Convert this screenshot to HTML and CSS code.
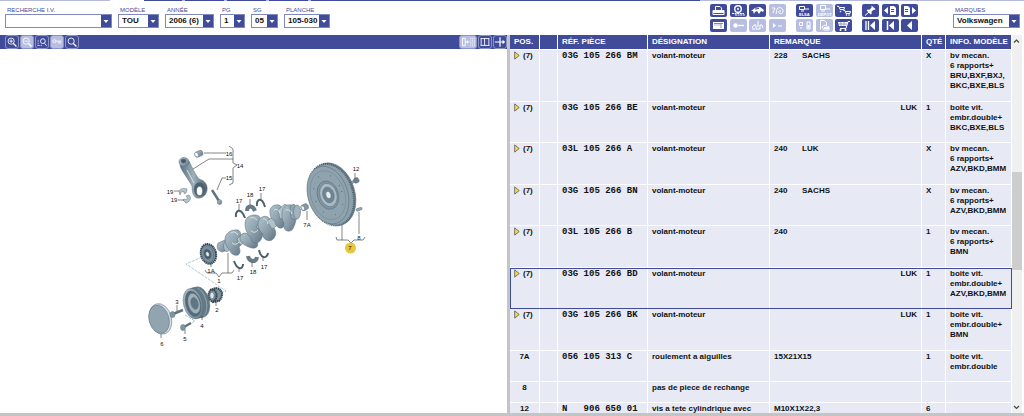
FILE: index.html
```html
<!DOCTYPE html>
<html lang="fr">
<head>
<meta charset="utf-8">
<title>Catalogue de pièces</title>
<link rel="stylesheet" href="styles.css">
</head>
<body>
<svg class="defs" aria-hidden="true">
  <defs>
    <symbol id="down" viewBox="0 0 10 12"><path d="M2.5 5h5L5 8z" fill="#fff"/></symbol>
    <symbol id="play" viewBox="0 0 6 9"><path d="M.7 .9v7.200L5.200 4.500z" fill="#f5e03a" stroke="#555" stroke-width=".8"/></symbol>
    <symbol id="lens" viewBox="0 0 14 13"><circle cx="6" cy="5.5" r="3.6" fill="none" stroke="#fff"/><path d="M8.6 8.2l3.6 3.6" stroke="#fff" stroke-width="1.4"/></symbol>
  </defs>
</svg>

<div class="tabs"><i class="tab wide"></i><i class="tab open"></i><i class="tab dark"></i><i class="tab dark"></i><i class="tab dark"></i><i class="tab dark"></i><i class="tab dark long"></i><i class="tab end"></i><i class="tab last"></i></div>

<header class="top">
  <form class="filters">
    <div class="field search"><label for="iv">RECHERCHE I.V.</label><div class="drop"><input id="iv" type="text"><svg class="arrow"><use href="#down"/></svg></div></div>
    <div class="field model"><label for="mo">MODÈLE</label><div class="drop"><select id="mo"><option>TOU</option></select><svg class="arrow"><use href="#down"/></svg></div></div>
    <div class="field year"><label for="an">ANNÉE</label><div class="drop"><select id="an"><option>2006 (6)</option></select><svg class="arrow"><use href="#down"/></svg></div></div>
    <div class="field pg"><label for="pg">PG</label><div class="drop"><select id="pg"><option>1</option></select><svg class="arrow"><use href="#down"/></svg></div></div>
    <div class="field sg"><label for="sg">SG</label><div class="drop"><select id="sg"><option>05</option></select><svg class="arrow"><use href="#down"/></svg></div></div>
    <div class="field plate"><label for="pl">PLANCHE</label><div class="drop"><select id="pl"><option>105-030</option></select><svg class="arrow"><use href="#down"/></svg></div></div>
  </form>

  <div class="tools">
    <div class="group four">
      <button class="tool" aria-label="Imprimer"><svg viewBox="0 0 17 13"><path d="M5.500 6V2.500h4.500l1.500 1.500v2M3 6.500h11v4H3z" fill="none" stroke="#fff"/><path d="M3 7h11v2H3zM5 10h7v1H5z" fill="#fff"/></svg></button>
      <button class="tool" aria-label="Roue"><svg viewBox="0 0 17 13"><circle cx="8" cy="5" r="3.300" fill="none" stroke="#fff" stroke-width="1.400"/><circle cx="8" cy="5" r="1" fill="#fff"/><path d="M2 9.500h12M5 11h10" stroke="#fff" stroke-dasharray="2 .6"/></svg></button>
      <button class="tool" aria-label="Véhicule"><svg viewBox="0 0 17 13"><path d="M2 7l4-3 5-1 4 3-1 2-2-1-2 3-2-3-2 1-1 2-1-3z" fill="#fff"/><path d="M6 5l4-.5" stroke="#404c9a"/></svg></button>
      <button class="tool off" aria-label="Références"><svg viewBox="0 0 17 13"><path d="M3 4h3l-2 5M7 10c1-2 0-5 2-6s5 0 5 3-3 3-4 2 0-3 2-2" fill="none" stroke="#fff"/></svg></button>
      <button class="tool" aria-label="Fiche"><svg viewBox="0 0 17 13"><path d="M3 3h11v7H3z" fill="#fff"/><path d="M4 4.500h9M11 5v4" stroke="#7c85bd"/><path d="M4 6h6" stroke="#b6bbdc"/></svg></button>
      <button class="tool off" aria-label="Clé"><svg viewBox="0 0 17 13"><circle cx="5.500" cy="6.500" r="2.200" fill="#fff"/><path d="M8 6.500h6" stroke="#fff" stroke-width="1.400"/></svg></button>
      <button class="tool off" aria-label="Atelier"><svg viewBox="0 0 17 13"><path d="M3 9l2-3h2v4h4V6h2l1 3M9 2v6M3 10h3" fill="none" stroke="#fff"/></svg></button>
      <button class="tool off" aria-label="Suite"><svg viewBox="0 0 17 13"><path d="M4 4l3 2.500L4 9z" fill="#fff"/><path d="M9 7h4" stroke="#fff"/></svg></button>
    </div>
    <div class="group three">
      <button class="tool" aria-label="ELSA"><svg viewBox="0 0 17 13"><path d="M3.500 2.500h5v3h-5zM5 7h3M9 5h4" fill="none" stroke="#fff"/><text class="mini" x="3" y="12">ELSA</text></svg></button>
      <button class="tool off" aria-label="Dépôt"><svg viewBox="0 0 17 13"><path d="M4.500 1.500h5v4h-5zM5 7h4M10 5h4" fill="none" stroke="#fff"/><text class="mini" x="2" y="12">DEPOT</text></svg></button>
      <button class="tool" aria-label="Paniers"><svg viewBox="0 0 17 13"><path d="M2 2l2 .5 1 3h4l.5-2H5M8 6l2 .5 1 3h4l.5-2H11" fill="none" stroke="#fff"/><circle cx="5.500" cy="7.500" r=".8" fill="#fff"/><circle cx="11.500" cy="11" r=".8" fill="#fff"/><circle cx="14" cy="11" r=".8" fill="#fff"/></svg></button>
      <button class="tool off" aria-label="Transfert"><svg viewBox="0 0 17 13"><path d="M3.500 3.500h3v3h-3zM5 8v2M11 3h3v7h-3z" fill="none" stroke="#fff"/><path d="M11.500 6h2v3h-2z" fill="#fff"/></svg></button>
      <button class="tool off" aria-label="Document"><svg viewBox="0 0 17 13"><path d="M4.500 10.500v-9h4l2 2v3M6 8l3-2 4 2v3H8z" fill="none" stroke="#fff"/><path d="M8 8h5v2H8z" fill="#fff"/></svg></button>
      <button class="tool" aria-label="Panier"><svg viewBox="0 0 17 13"><path d="M15 2.500h-2l-2 7H5" fill="none" stroke="#fff"/><path d="M3 3h9.500l-1 4H4z" fill="#fff"/><path d="M4 5h8M6 3v4M9 3v4" stroke="#404c9a" stroke-width=".5"/><circle cx="5.500" cy="11" r="1" fill="#fff"/><circle cx="10.500" cy="11" r="1" fill="#fff"/></svg></button>
    </div>
    <div class="group last three">
      <button class="tool" aria-label="Épingler"><svg viewBox="0 0 17 13"><path d="M9.500 1.500l4 3.500-1 1-1-.2-2 2 .2 2-1 .8-4-4 .8-1 2 .2 2-2z" fill="#fff"/><path d="M7 8l-4 3.500" stroke="#fff"/></svg></button>
      <button class="tool" aria-label="Page précédente"><svg viewBox="0 0 17 13"><path d="M6 3v7L2 6.500zM8 2h4l2 2v7H8z" fill="#fff"/><path d="M9 5.500h3M9 7.500h3" stroke="#404c9a"/></svg></button>
      <button class="tool" aria-label="Page suivante"><svg viewBox="0 0 17 13"><path d="M11 3v7l4-3.500zM3 2h4l2 2v7H3z" fill="#fff"/><path d="M4 5.500h3M4 7.500h3" stroke="#404c9a"/></svg></button>
      <button class="tool" aria-label="Début"><svg viewBox="0 0 17 13"><path d="M4 2v9M6.500 2v9" stroke="#fff" stroke-width="1.300"/><path d="M13 2v9L8 6.500z" fill="#fff"/></svg></button>
      <button class="tool" aria-label="Premier"><svg viewBox="0 0 17 13"><path d="M5.500 2v9" stroke="#fff" stroke-width="1.500"/><path d="M12 2v9L7 6.500z" fill="#fff"/></svg></button>
      <button class="tool" aria-label="Précédent"><svg viewBox="0 0 17 13"><path d="M11 2v9L6 6.500z" fill="#fff"/></svg></button>
    </div>
  </div>

  <div class="field brand"><label for="br">MARQUES</label><div class="drop"><select id="br"><option>Volkswagen</option></select><svg class="arrow"><use href="#down"/></svg></div></div>
</header>

<main class="work">
  <section class="picture">
    <div class="bar">
      <button class="zoom" aria-label="Agrandir"><svg viewBox="0 0 14 13"><use href="#lens"/><path d="M4 5.500h4M6 3.500v4" stroke="#fff"/></svg></button>
      <button class="zoom off" aria-label="Réduire"><svg viewBox="0 0 14 13"><use href="#lens"/><path d="M4 5.500h4" stroke="#fff"/></svg></button>
      <button class="zoom" aria-label="Zone"><svg viewBox="0 0 14 13"><path d="M2.500 11V3.500M2 10.500h6" stroke="#fff" stroke-dasharray="1 1"/><circle cx="8" cy="5.500" r="2.800" fill="none" stroke="#fff"/><path d="M10 8l2.500 3" stroke="#fff"/></svg></button>
      <button class="zoom off" aria-label="Clé"><svg viewBox="0 0 14 13"><circle cx="4" cy="5.500" r="1.800" fill="none" stroke="#fff"/><path d="M6 5.500h6M8 7.500h4" stroke="#fff"/></svg></button>
      <button class="zoom" aria-label="Loupe"><svg viewBox="0 0 14 13"><use href="#lens"/></svg></button>
      <span class="fill"></span>
      <button class="zoom off big" aria-label="Liste"><svg viewBox="0 0 17 13"><path d="M2.500 2.500h3v8h-3zM6 6.500h4M8 5v3" fill="none" stroke="#fff"/><path d="M11.500 2v9M13.500 2v9M15.500 2v9" stroke="#fff" stroke-dasharray="1 1"/></svg></button>
      <button class="zoom" aria-label="Colonnes"><svg viewBox="0 0 14 13"><path d="M2 2.500h10M2 10.500h10M2.500 2v9M11.500 2v9M6.500 2v9" stroke="#fff"/></svg></button>
      <button class="zoom" aria-label="Déplacer"><svg viewBox="0 0 14 13"><path d="M7 1v11M1 6.500h11" stroke="#fff" stroke-width="1.400"/><path d="M10 4l3 2.500L10 9z" fill="#fff"/></svg></button>
    </div>
    <svg class="diagram" viewBox="0 49 507 364" preserveAspectRatio="xMinYMin meet" role="img" aria-label="Vilebrequin et bielle">
      <defs>
        <linearGradient id="steel" x1="0" y1="0" x2="1" y2="1"><stop offset="0" stop-color="#b3c3cc"/><stop offset=".5" stop-color="#8fa3af"/><stop offset="1" stop-color="#5f7482"/></linearGradient>
        <linearGradient id="rod" x1="0" y1="0" x2="1" y2="0"><stop offset="0" stop-color="#5b707d"/><stop offset=".5" stop-color="#9db1bc"/><stop offset="1" stop-color="#4d616e"/></linearGradient>
      </defs>
      <g class="guide">
        <path d="M202 257L186 264 226 291l-9 3M185 315l10 6-5 3M296 212l28-15"/>
      </g>
      <g class="part">
        <!-- connecting rod -->
        <path fill="url(#rod)" d="M180 165c0 4 9 15 12 21 0 8 2 13 8 12s9-9 6-14c-2-4-6-4-8-6-3-4-6-11-9-17z"/>
        <ellipse cx="184" cy="162" rx="5" ry="4.500" fill="url(#steel)"/><ellipse cx="183.500" cy="161" rx="2.500" ry="2" fill="#435664"/>
        <ellipse cx="199.500" cy="189.500" rx="5.500" ry="7" fill="#4c606d"/><ellipse cx="199.500" cy="191" rx="3" ry="4.500" fill="#fff"/>
        <path d="M187 170l7 13" class="shine"/>
        <g transform="rotate(-22 199 154)"><rect x="195" y="151" width="8" height="5.500" rx="2" fill="url(#steel)"/><ellipse cx="196.500" cy="153.700" rx="1.700" ry="2.500" fill="#fff"/></g>
        <path class="bolt" d="M212 190l7 11"/><ellipse cx="219.500" cy="202" rx="2.300" ry="2.500" fill="url(#steel)"/>
        <path fill="#b4c4cd" d="M179 191c2-3 5-3 8-2l-1 4-2 .5v-2l-3 .5-1 3zM189 195c3 3 1 7-3 8l-3-3 2-1 1 1c2-1 1-3 0-4z"/>
        <!-- flywheel -->
        <g transform="rotate(-17 330 195)"><ellipse cx="333" cy="195" rx="22" ry="32" fill="#687d8a"/><ellipse cx="331" cy="195" rx="22" ry="31.500" class="teeth"/><ellipse cx="328" cy="194.500" rx="20" ry="29.500" fill="#8fa3af"/><ellipse cx="328" cy="194.500" rx="17" ry="25"  class="ring"/><ellipse cx="328" cy="194.500" rx="10.500" ry="14.500" fill="#8195a1"/><ellipse cx="328.500" cy="194.500" rx="8.500" ry="12" fill="#a9bac4"/><ellipse cx="328.500" cy="194.500" rx="5.500" ry="8" fill="#708593"/><ellipse cx="328.500" cy="194.500" rx="2.500" ry="3.700" fill="#e8eef0"/><ellipse cx="328.500" cy="194.500" rx="14" ry="21" class="holes"/></g>
        <g transform="rotate(-25 355 181)"><rect x="351" y="180" width="4" height="2" fill="#8fa3af"/><rect x="354" y="178.500" width="5" height="5" rx="1.500" fill="#6e8390"/></g>
        <rect x="356" y="208" width="6" height="2.500" rx="1" transform="rotate(-20 359 209)" fill="#94a8b3"/>
        <!-- crankshaft -->
        <path d="M218 243l9-4 5 10-10 3q-7-2-4-9z" fill="url(#steel)"/>
        <ellipse cx="227" cy="246" rx="3.500" ry="5.500" fill="#a8bac4"/>
        <path d="M225 239c0-5 5-9 10-9 5-1 6 3 6 7 2 4 1 8-2 10 1 3 2 6-1 8-3 1-8-1-8-5-3-2-5-6-5-11z" fill="url(#steel)"/>
        <path d="M237 239l5-5c4 0 7 3 6 7l-8 4z" fill="#b7c6ce"/>
        <path d="M240 237c2-5 7-5 9-1s6 3 8 6 0 7-5 6-13-5-12-11z" fill="url(#steel)"/>
        <path d="M245 224c0-7 5-9 10-9 5 0 7 4 5 8 4 4 4 13 0 18-3 3-9 3-9-3-4-4-6-9-6-14z" fill="url(#steel)"/>
        <path d="M256 227l6-8c6 0 11 3 10 8l-9 5z" fill="#a7b9c3"/>
        <path d="M258 224c1-7 6-9 10-7 4 3 3 8 6 11 3 4 2 9-2 12-4 2-10-1-9-6-3-2-5-6-5-10z" fill="url(#steel)"/>
        <path d="M267 221l7-5 5 8-7 5z" fill="#b2c2cb"/>
        <path d="M270 213c-1-6 4-9 9-8 4 2 5 6 4 9 4 5 3 11-1 14-4 1-7-3-7-7-4-2-5-5-5-8z" fill="url(#steel)"/>
        <path d="M278 210l7-6 6 4-3 9-8 2z" fill="#b3c3cc"/>
        <path d="M282 214c0-7 4-10 9-9 4 1 3 6 4 10 2 4 0 11-3 15-4 3-10 0-8-7-2-2-2-5-2-9z" fill="url(#steel)"/>
        <path d="M290 206l4-2 6 8-4 8-5-2z" fill="#91a5b1"/><ellipse cx="297" cy="212" rx="3.500" ry="7" fill="#a0b3be"/>
        <path class="shine" d="M231 233q4-3 7 2M250 218q4-2 7 2M263 219q4-1 5 5M274 210q4-2 6 3M286 210q5-1 6 4M232 243q4 3 7-1M251 231q4 3 7-1"/>
        <g transform="rotate(-25 304 207)"><rect x="301" y="204.500" width="7" height="6" rx="2" fill="#8397a3"/><ellipse cx="302.500" cy="207.500" rx="1.700" ry="2.500" fill="#e9eef0"/></g>
        <!-- sprocket, gear and pulley -->
        <g transform="rotate(-15 208 254)"><ellipse cx="208.500" cy="254" rx="7.500" ry="10" class="gear"/><ellipse cx="207.500" cy="254" rx="6" ry="8.500" fill="#7b909d"/><ellipse cx="207.500" cy="254" rx="3.500" ry="5" fill="#475a67"/><ellipse cx="207.500" cy="254" rx="1.700" ry="2.500" fill="#e8eef1"/></g>
        <path d="M210 290l6-2c7 1 8 8 3 13l-6 1z" class="gear"/><ellipse cx="212.500" cy="295.500" rx="4" ry="5.800" class="gear"/><ellipse cx="212" cy="295.500" rx="2" ry="3.300" fill="#dfe8ec"/>
        <g transform="rotate(-14 196 303)"><ellipse cx="200" cy="303" rx="9.500" ry="15.500" fill="#657a87"/><ellipse cx="198" cy="303" rx="9.500" ry="15.500" fill="#8ba0ac"/><ellipse cx="196" cy="303" rx="9.500" ry="15.500" fill="#657a87"/><ellipse cx="193" cy="303" rx="9.500" ry="15.500" fill="url(#steel)"/><ellipse cx="193" cy="303" rx="7.500" ry="13" fill="#53697a"/><ellipse cx="194" cy="303" rx="6" ry="10.500" fill="#9fb1bc"/><ellipse cx="194.500" cy="303" rx="3.500" ry="6" fill="#617684"/></g>
        <g transform="rotate(-15 160 319)"><ellipse cx="160.500" cy="319" rx="11" ry="15.500" fill="#d5dfe4"/><ellipse cx="159" cy="319" rx="10" ry="14.500" fill="#91a5b1"/></g>
        <path class="bolt" d="M173 314l10-4M184 327l7-4"/><ellipse cx="172.500" cy="314.500" rx="2.500" ry="3" fill="#8095a2"/><ellipse cx="183" cy="327.500" rx="2.500" ry="3" fill="#8095a2"/>
      </g>
      <!-- bearing shells -->
      <g class="shell">
        <path d="M236 217c-1-7 5-10 9 1M257 206c-1-7 5-10 8 1M234 261c3 9 9 9 9 3M259 250c2 9 8 9 9 3"/>
        <path class="thick" d="M247 211c0-6 6-6 8 0M248 256c1 6 8 7 9 1"/>
      </g>
      <g class="lead">
        <path d="M204 153h22M193 169l16-10h24M229 146l4 3v14l4 2-4 3v15l-4 2M226 178h-4l-5 12M174 191h5M178 200h6M239 204v6M250 199v6M261 193v6M239 272v-4M252 267v-5M263 261v-5M307 220v-9M355 173v6M359 212v22M342 225v15M336 237l1 3h11l3 3 3-3h9l2-3M228 253v20M205 270l2 3h9l3 4 3-4h10l2-3M216 306v-5M202 320v-4M177 305v6M185 334v-4M161 338v-4M211 267v-3"/>
      </g>
      <circle cx="350.500" cy="248" r="5.500" fill="#e8c63c"/>
      <g class="num">
        <text x="229" y="156">16</text><text x="240" y="168">14</text><text x="229" y="180">15</text><text x="170" y="194">19</text><text x="174" y="202">19</text>
        <text x="239" y="203">17</text><text x="250" y="197">18</text><text x="262" y="191">17</text><text x="307" y="227">7A</text><text x="356" y="171">12</text><text x="359" y="240">8</text><text x="350" y="250">7</text>
        <text x="264" y="269">17</text><text x="253" y="274">18</text><text x="240" y="280">17</text><text x="211" y="273">1A</text><text x="219" y="283">1</text><text x="217" y="312">2</text><text x="177" y="304">3</text><text x="202" y="328">4</text><text x="185" y="341">5</text><text x="162" y="346">6</text>
      </g>
    </svg>
  </section>

  <section class="parts">
    <div class="list">
      <table>
        <colgroup><col class="c-pos"><col class="c-gap"><col class="c-ref"><col class="c-des"><col><col class="c-qty"><col class="c-info"></colgroup>
        <thead><tr><th>POS.</th><th></th><th>RÉF. PIÈCE</th><th>DÉSIGNATION</th><th>REMARQUE</th><th>QTÉ</th><th>INFO. MODÈLE</th></tr></thead>
        <tbody>
          <tr class="tall"><td class="pos"><svg class="mark"><use href="#play"/></svg>(7)</td><td></td><td class="ref">03G 105 266 BM</td><td>volant-moteur</td><td><span class="code">228</span>SACHS</td><td>X</td><td>bv mecan.<br>6 rapports+<br>BRU,BXF,BXJ,<br>BKC,BXE,BLS</td></tr>
          <tr><td class="pos"><svg class="mark"><use href="#play"/></svg>(7)</td><td></td><td class="ref">03G 105 266 BE</td><td>volant-moteur</td><td class="right">LUK</td><td>1</td><td>boite vit.<br>embr.double+<br>BKC,BXE,BLS</td></tr>
          <tr><td class="pos"><svg class="mark"><use href="#play"/></svg>(7)</td><td></td><td class="ref">03L 105 266 A</td><td>volant-moteur</td><td><span class="code">240</span>LUK</td><td>X</td><td>bv mecan.<br>6 rapports+<br>AZV,BKD,BMM</td></tr>
          <tr><td class="pos"><svg class="mark"><use href="#play"/></svg>(7)</td><td></td><td class="ref">03G 105 266 BN</td><td>volant-moteur</td><td><span class="code">240</span>SACHS</td><td>X</td><td>bv mecan.<br>6 rapports+<br>AZV,BKD,BMM</td></tr>
          <tr><td class="pos"><svg class="mark"><use href="#play"/></svg>(7)</td><td></td><td class="ref">03L 105 266 B</td><td>volant-moteur</td><td>240</td><td>1</td><td>bv mecan.<br>6 rapports+<br>BMN</td></tr>
          <tr class="selected"><td class="pos"><svg class="mark"><use href="#play"/></svg>(7)</td><td></td><td class="ref">03G 105 266 BD</td><td>volant-moteur</td><td class="right">LUK</td><td>1</td><td>boite vit.<br>embr.double+<br>AZV,BKD,BMM</td></tr>
          <tr><td class="pos"><svg class="mark"><use href="#play"/></svg>(7)</td><td></td><td class="ref">03G 105 266 BK</td><td>volant-moteur</td><td class="right">LUK</td><td>1</td><td>boite vit.<br>embr.double+<br>BMN</td></tr>
          <tr class="medium"><td class="pos plain">7A</td><td></td><td class="ref">056 105 313 C</td><td>roulement a aiguilles</td><td>15X21X15</td><td>1</td><td>boite vit.<br>embr.double</td></tr>
          <tr class="short"><td class="pos plain">8</td><td></td><td></td><td>pas de piece de rechange</td><td></td><td></td><td></td></tr>
          <tr class="short"><td class="pos plain">12</td><td></td><td class="ref">N   906 650 01</td><td>vis a tete cylindrique avec</td><td>M10X1X22,3</td><td>6</td><td></td></tr>
        </tbody>
      </table>
    </div>
    <div class="scroll" aria-hidden="true">
      <svg class="chev" viewBox="0 0 9 12"><path d="M2 7.500l2.500-2.500L7 7.500"/></svg>
      <span class="before"></span><span class="thumb"></span><span class="after"></span>
      <svg class="chev" viewBox="0 0 9 12"><path d="M2 5l2.500 2.500L7 5"/></svg>
    </div>
  </section>
</main>
</body>
</html>
```
FILE: styles.css
```css
* { box-sizing: border-box; }

body {
  margin: 0;
  height: 100vh;
  display: flex;
  flex-direction: column;
  overflow: hidden;
  background: #fff;
  color: #111;
  font: bold 8px/10px "Liberation Sans", Arial, sans-serif;
}

.defs { display: none; }
button, input, select { font: inherit; color: inherit; margin: 0; padding: 0; }

.tabs { display: flex; height: 1px; }
.tab { flex: 39 1 0; background: #b5bbdd; }
.tab.wide { flex-grow: 110; }
.tab.open { flex-grow: 34; background: #fff; }
.tab.dark { background: #404c9a; border-right: 3px solid #b5bbdd; }
.tab.long { flex-grow: 390; }
.tab.end { flex-grow: 215; }
.tab.last { flex-grow: 106; border-left: 1px solid #8f97c8; }

.top { display: flex; align-items: flex-start; height: 34px; padding: 3px 4px 0 5px; }
.filters { display: flex; gap: 6px; flex: 1; margin: 0; }
.field label { display: block; height: 10px; padding-left: 2px; font-size: 6px; line-height: 12px; font-weight: normal; color: #404c9a; }
.search { width: 107px; }
.model { width: 41px; }
.year { width: 49px; }
.pg { width: 25px; }
.sg { width: 27px; }
.plate { width: 46px; }
.brand { width: 67px; margin-left: 35px; }

.drop { display: grid; height: 14px; border: 1px solid #7f88bf; background: #fff; align-items: stretch; }
.drop input, .drop select {
  grid-area: 1 / 1;
  width: 100%;
  min-width: 0;
  height: 12px;
  padding-left: 3px;
  border: 0;
  background: transparent;
  appearance: none;
  outline: 0;
}
.arrow { grid-area: 1 / 1; justify-self: end; width: 10px; height: 12px; background: #404c9a; pointer-events: none; }

.tools { display: flex; }
.group { display: grid; justify-content: space-between; gap: 2px 0; margin-right: 10px; }
.group.last { margin-right: 0; }
.four { grid-template-columns: repeat(4, 17px); width: 76px; }
.three { grid-template-columns: repeat(3, 17px); width: 56px; }
.tool { width: 17px; height: 13px; border: 0; border-radius: 2px; background: #404c9a; }
.tool svg, .zoom svg { display: block; width: 100%; height: 100%; }
.tool.off, .zoom.off { background: #b8bedf; }
.mini { font: bold 4px "Liberation Sans", Arial, sans-serif; fill: #fff; }

.work { display: flex; flex: 1; min-height: 0; border-bottom: 3px solid #c4c4c4; }

.picture { flex: 507 1 0; min-width: 0; display: flex; flex-direction: column; }
.bar { display: flex; gap: 1px; height: 14px; padding-left: 5px; background: #404c9a; }
.fill { flex: 1; }
.zoom { width: 14px; height: 14px; border: 1px solid #8b93c6; border-radius: 3px; background: #404c9a; }
.zoom.big { width: 18px; }

.diagram { flex: 1; min-height: 0; width: 100%; }
.part { stroke: #566b79; stroke-width: .5; }
.guide { fill: none; stroke: #8eafc0; stroke-width: .7; stroke-dasharray: 3 1; }
.lead { fill: none; stroke: #333; stroke-width: .6; }
.shell { fill: none; stroke: #4c606d; stroke-width: 2; }
.shell .thick { stroke-width: 4; stroke: #657b88; }
.shine { fill: none; stroke: #d7e1e6; stroke-width: 1; }
.bolt { fill: none; stroke: #5f7481; stroke-width: 2.5; }
.teeth { fill: #8da1ad; stroke: #4e626f; stroke-width: 2; stroke-dasharray: 1 1; }
.ring { fill: none; stroke: #6d828f; }
.holes { fill: none; stroke: #566b79; stroke-width: 1; stroke-dasharray: 1 12; }
.gear { fill: #7b909d; stroke: #34444f; stroke-width: 2; stroke-dasharray: 1.5 .5; }
.num { font: 6px "Liberation Sans", Arial, sans-serif; fill: #111; text-anchor: middle; }

.parts { flex: 512 1 0; min-width: 0; display: flex; border-left: 3px solid #c4c4c4; padding-right: 2px; }
.list { flex: 1; min-width: 0; overflow: hidden; }
table { width: 100%; border-collapse: separate; border-spacing: 0; table-layout: fixed; }
.c-pos { width: 30px; }
.c-gap { width: 18px; }
.c-ref { width: 90px; }
.c-des { width: 122px; }
.c-qty { width: 24px; }
.c-info { width: 66px; }
th { height: 15px; padding: 0 0 0 4px; border-right: 1px solid #fff; border-bottom: 1px solid #fff; background: #404c9a; color: #fff; text-align: left; white-space: nowrap; }
td { height: 41px; padding: 1px 4px 0; border-right: 1px solid #fff; border-bottom: 1px solid #fff; background: #e7eaf4; vertical-align: top; white-space: nowrap; }
tr:nth-child(odd) td { height: 42px; }
tr.tall td { height: 52px; }
tr.medium td { height: 31px; }
tr.short td { height: 21px; }
.selected { outline: 1px solid #404c9a; outline-offset: -1px; }
.ref { font: bold 9px/10px "Liberation Mono", "Courier New", monospace; white-space: pre; }
.right { text-align: right; }
.code { display: inline-block; width: 28px; }
.pos.plain { text-align: center; }
.mark { display: inline-block; width: 6px; height: 9px; margin-right: 3px; vertical-align: top; }

.scroll { width: 10px; display: flex; flex-direction: column; background: #f0f0f0; }
.chev { width: 9px; height: 12px; fill: none; stroke: #444; stroke-width: 1.2; }
.before { flex: 125 1 0; }
.thumb { flex: 98 1 0; background: #cdcdcd; }
.after { flex: 131 1 0; }
```
